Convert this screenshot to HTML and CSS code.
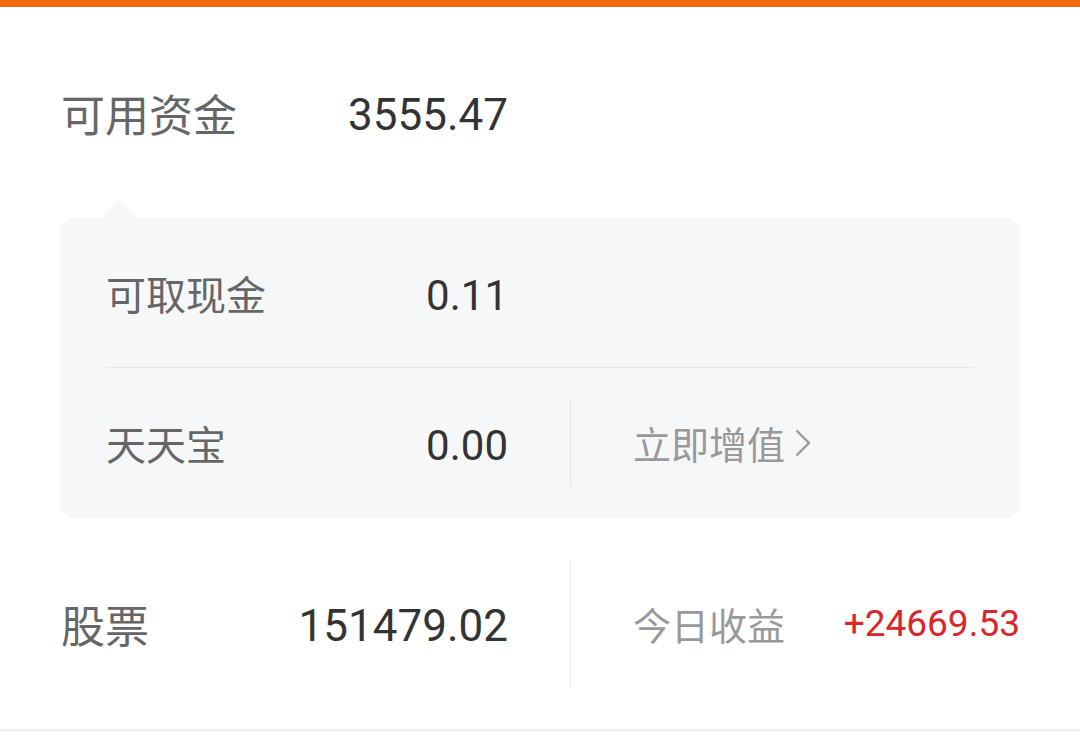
FILE: index.html
```html
<!DOCTYPE html>
<html lang="zh-CN">
<head>
<meta charset="utf-8">
<link rel="stylesheet" href="styles.css">
</head>
<body>
<div class="topbar"></div>
<div class="main">
  <div class="row-top">
    <div class="col-left">
      <span class="label">可用资金</span>
      <span class="value">3555.47</span>
    </div>
  </div>
  <div class="panel">
    <div class="arrow"></div>
    <div class="prow prow-first">
      <div class="pcol-left">
        <span class="plabel">可取现金</span>
        <span class="pvalue">0.11</span>
      </div>
    </div>
    <div class="prow">
      <div class="pcol-left">
        <span class="plabel">天天宝</span>
        <span class="pvalue">0.00</span>
      </div>
      <div class="vdiv vdiv-panel"></div>
      <div class="pcol-right">
        <span class="link">立即增值</span>
        <svg class="chev" width="16" height="28" viewBox="0 0 16 28"><polyline points="1.5,1.5 14,14 1.5,26.5" fill="none" stroke="#9a9a9a" stroke-width="2.4"/></svg>
      </div>
    </div>
  </div>
  <div class="row-stock">
    <div class="col-left">
      <span class="label">股票</span>
      <span class="value">151479.02</span>
    </div>
    <div class="vdiv vdiv-stock"></div>
    <div class="col-right">
      <span class="glabel">今日收益</span>
      <span class="red">+24669.53</span>
    </div>
  </div>
</div>
<div class="bottomline"></div>
</body>
</html>
```

FILE: styles.css
```css
* { box-sizing: border-box; }
html, body { margin: 0; padding: 0; background: #ffffff; }
body {
  width: 1080px;
  height: 735px;
  overflow: hidden;
  font-family: Roboto, "Noto Sans CJK SC", sans-serif;
}
.topbar {
  height: 7px;
  background: #f4690c;
}
.main {
  padding: 0 60px;
}
.row-top {
  margin-top: 46px;
  height: 120px;
  display: flex;
  align-items: center;
}
.col-left {
  width: 448px;
  display: flex;
  justify-content: space-between;
  align-items: center;
  padding-left: 1px;
}
.label {
  font-family: "Noto Sans CJK SC", sans-serif;
  font-size: 44px;
  color: #666666;
  line-height: 1;
}
.value {
  font-family: Roboto, sans-serif;
  font-size: 44px;
  color: #333333;
  line-height: 1;
  padding-top: 4px;
}
.panel {
  position: relative;
  margin-top: 45px;
  background: #f6f7f9;
  border-radius: 14px;
  padding: 0 46px;
}
.arrow {
  position: absolute;
  top: -18px;
  left: 41px;
  width: 0;
  height: 0;
  border-left: 18px solid transparent;
  border-right: 18px solid transparent;
  border-bottom: 18px solid #f6f7f9;
}
.prow {
  height: 150px;
  display: flex;
  align-items: center;
}
.prow-first {
  border-bottom: 1px solid #e6e7ea;
}
.pcol-left {
  width: 402px;
  display: flex;
  justify-content: space-between;
  align-items: center;
}
.plabel {
  font-family: "Noto Sans CJK SC", sans-serif;
  font-size: 40px;
  color: #666666;
  line-height: 1;
}
.pvalue {
  font-family: Roboto, sans-serif;
  font-size: 42px;
  color: #333333;
  line-height: 1;
  padding-top: 6px;
}
.vdiv {
  width: 1px;
  background: #e4e5e8;
  margin-left: 62px;
}
.vdiv-panel { height: 88px; }
.vdiv-stock { height: 128px; background: #ececee; }
.pcol-right {
  display: flex;
  align-items: center;
  padding-left: 62px;
}
.link {
  font-family: "Noto Sans CJK SC", sans-serif;
  font-size: 38px;
  color: #999999;
  line-height: 1;
}
.chev {
  margin-left: 10px;
  display: block;
}
.row-stock {
  height: 211px;
  display: flex;
  align-items: center;
}
.col-right {
  flex: 1;
  display: flex;
  justify-content: space-between;
  align-items: center;
  padding-left: 62px;
}
.glabel {
  font-family: "Noto Sans CJK SC", sans-serif;
  font-size: 38px;
  color: #999999;
  line-height: 1;
}
.red {
  font-family: Roboto, sans-serif;
  font-size: 37px;
  color: #d9262b;
  line-height: 1;
}
.bottomline {
  height: 2px;
  background: #efeff1;
}
```
